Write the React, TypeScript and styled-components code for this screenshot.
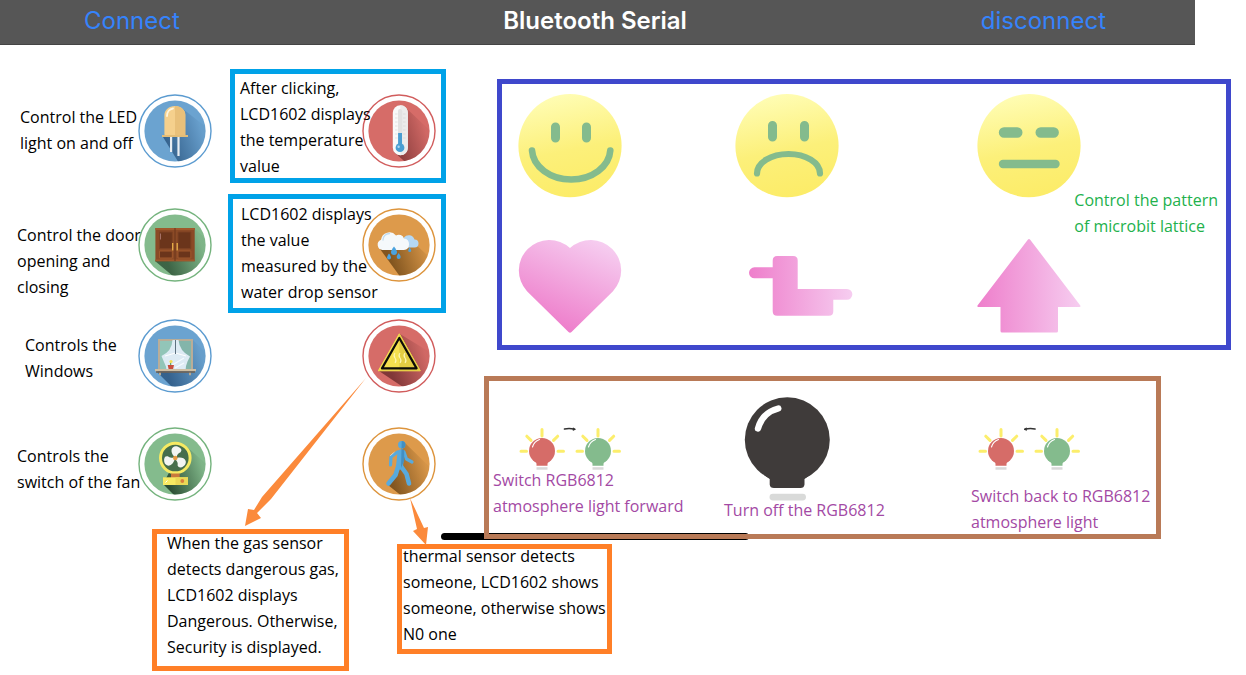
import React from 'react';
import styled, { createGlobalStyle } from 'styled-components';

const GlobalStyle = createGlobalStyle`
  *, *::before, *::after { box-sizing: border-box; }
  body {
    margin: 0;
    background: #fff;
    color: #000;
    font-family: "Open Sans", "Noto Sans", sans-serif;
    font-size: 16px;
    line-height: 26px;
  }
  svg { display: block; }
`;

const TopBar = styled.header`
  display: grid;
  grid-template-columns: 1fr auto 1fr;
  align-items: center;
  height: 45px;
  margin-right: 51px;
  padding: 0 89px 3px 84px;
  background: #565656;
  border-bottom: 1px solid #444;
  font-family: Inter, "Liberation Sans", sans-serif;
`;

const Title = styled.h1`
  margin: 0;
  color: #fff;
  font-size: 24px;
  font-weight: 600;
  line-height: 32px;
`;

const BarButton = styled.button<{ $end?: boolean }>`
  justify-self: ${p => (p.$end ? 'end' : 'start')};
  padding: 0;
  border: 0;
  background: none;
  color: #3583fb;
  font: inherit;
  font-size: 24px;
  line-height: 32px;
  cursor: pointer;
`;

const Main = styled.main`
  display: flex;
  align-items: flex-start;
  padding-top: 24px;
`;

const Controls = styled.section`
  flex: none;
  width: 446px;
`;

const ControlRow = styled.div<{ $gap: number }>`
  display: grid;
  grid-template-columns: 138px 74px 1fr;
  align-items: start;
  margin-top: ${p => p.$gap}px;
`;

const Text = styled.p<{ $top?: number; $left?: number; $color?: string }>`
  margin: ${p => p.$top ?? 0}px 0 0 ${p => p.$left ?? 0}px;
  color: ${p => p.$color ?? '#000'};
  white-space: pre;
`;

const IconButton = styled.button<{ $top?: number; $left?: number }>`
  display: block;
  margin: ${p => p.$top ?? 0}px 0 0 ${p => p.$left ?? 0}px;
  padding: 0;
  border: 0;
  background: none;
  cursor: pointer;
`;

const Reading = styled.div<{ $framed?: boolean; $wide?: boolean }>`
  display: grid;
  justify-self: end;
  width: ${p => (p.$wide ? 218 : 216)}px;
  height: ${p => (p.$framed ? (p.$wide ? '119px' : '114px') : 'auto')};
  border: ${p => (p.$framed ? '5px solid #00a2e8' : '0 solid transparent')};
  padding-right: ${p => (p.$framed ? 5 : 10)}px;

  > * { grid-area: 1 / 1; }
  > button { justify-self: end; align-self: start; }
  > p { position: relative; justify-self: start; pointer-events: none; }
`;

const Notes = styled.div`
  display: flex;
  align-items: flex-start;
  gap: 48px;
  margin-top: 28px;
  padding-left: 152px;
`;

const Note = styled.div<{ $w: number; $h: number; $top?: number }>`
  position: relative;
  flex: none;
  width: ${p => p.$w}px;
  height: ${p => p.$h}px;
  margin-top: ${p => p.$top ?? 0}px;
  border: 5px solid #ff7f27;
`;

const Pointer = styled.svg<{ $left: number; $rise: number }>`
  position: absolute;
  left: ${p => p.$left}px;
  bottom: calc(100% + ${p => p.$rise}px);
  pointer-events: none;
`;

const Panels = styled.section`
  flex: 1;
  min-width: 0;
  padding: 10px 15px 0 38px;
`;

const PatternPanel = styled.div`
  display: grid;
  grid-template-columns: 217fr 242fr 249fr;
  grid-template-rows: 104px 94px;
  row-gap: 41px;
  align-items: start;
  height: 271px;
  margin-left: 13px;
  padding: 10px 0 0 16px;
  border: 5px solid #3f48cc;
`;

const PatternCaption = styled.div`
  grid-area: 1 / 3 / 3 / 4;
  justify-self: end;
  align-self: start;
  padding: 93px 8px 0 0;
  pointer-events: none;
`;

const Cell = styled.div<{ $col: number; $row: number }>`
  grid-area: ${p => p.$row} / ${p => p.$col};
`;

const LightPanel = styled.div`
  position: relative;
  z-index: 0;
  display: grid;
  grid-template-columns: 231fr 247fr 185fr;
  height: 163px;
  margin: 26px 70px 0 0;
  padding-left: 4px;
  border: 5px solid #b97a57;

  &::before {
    content: '';
    position: absolute;
    z-index: -2;
    left: -48px;
    bottom: -6px;
    width: 308px;
    height: 7px;
    border-radius: 4px;
    background: #000;
  }
`;

const LightEdge = styled.span`
  position: absolute;
  z-index: -1;
  inset: -5px;
  border: 5px solid #b97a57;
  pointer-events: none;
`;

const tones = {
  blue: { disc: '#6ba3d0', ring: '#5b9bd0', shade: '#27517c' },
  red: { disc: '#d66c68', ring: '#d15c5c', shade: '#6b2a2c' },
  green: { disc: '#84bb8d', ring: '#74b37d', shade: '#2c4f34' },
  orange: { disc: '#dd9a4b', ring: '#dd943c', shade: '#6b4414' },
};

function Badge({ id, tone, shadow, depth = 0.8, children }: {
  id: string; tone: keyof typeof tones; shadow: string; depth?: number; children: React.ReactNode;
}) {
  const t = tones[tone];
  return (
    <svg width="74" height="74" viewBox="0 0 74 74" aria-hidden="true">
      <defs>
        <clipPath id={`${id}-clip`}><circle cx="37" cy="37" r="30.6" /></clipPath>
        <linearGradient id={`${id}-shade`} gradientUnits="userSpaceOnUse" x1="28" y1="50" x2="64" y2="38">
          <stop offset="0" stopColor={t.shade} stopOpacity={depth} />
          <stop offset="1" stopColor={t.shade} stopOpacity="0.06" />
        </linearGradient>
      </defs>
      <circle cx="37" cy="37" r="36" fill="#fff" stroke={t.ring} strokeWidth="1.4" />
      <circle cx="37" cy="37" r="30.6" fill={t.disc} />
      <path d={shadow} fill={`url(#${id}-shade)`} clipPath={`url(#${id}-clip)`} />
      {children}
    </svg>
  );
}

const LedBadge = () => (
  <Badge id="led" tone="blue" shadow="M45 15L72 36V74H44L25 43Z">
    <path d="M32 42h2.2v16H32z" fill="#e8edf2" />
    <path d="M39.4 42h2.2v20h-2.2z" fill="#e8edf2" />
    <path d="M26.4 42V21c0-5 4.500-9 10.600-9s10.300 4 10.300 9v21z" fill="#f5d08d" />
    <path d="M37 12c6 0 10.300 4 10.300 9v21H37z" fill="#e9c07a" />
    <path d="M29 22c0-4 2.500-7 6-7.500" fill="none" stroke="#fff6df" strokeWidth="1.800" strokeLinecap="round" />
    <path d="M24 41h26v2H24z" fill="#e3bd78" />
  </Badge>
);

const DoorBadge = () => (
  <Badge id="door" tone="green" shadow="M56 20L74 37V74H42L17 53Z">
    <path d="M17.400 20h39.300v33.300H17.400z" fill="#8b4a26" />
    <path d="M17.400 20h39.300v2H17.400zM17.400 51.500h39.300v1.800H17.400z" fill="#a0582c" />
    {[21.500, 40].map(x => (
      <g key={x}>
        <path d={`M${x} 24h12.800v16.500h-12.800z`} fill="#6b351b" stroke="#7d4122" strokeWidth="1" />
        <path d={`M${x} 43h12.800v7h-12.800z`} fill="#6b351b" stroke="#a0582c" strokeWidth="1" />
      </g>
    ))}
    <path d="M37 20v33" stroke="#6b351b" strokeWidth="1" />
    <path d="M34.700 35v7.500M39.200 35v7.500" stroke="#e8b04a" strokeWidth="1.300" />
    <path d="M22.500 25.500v6" stroke="#c99" strokeWidth="0.600" />
  </Badge>
);

const ThermometerBadge = () => (
  <Badge id="temp" tone="red" shadow="M43 13L74 42V74H50L32 58Z">
    <rect x="30.800" y="11.300" width="15" height="50" rx="7.500" fill="#f9f9f9" />
    <path d="M38.300 11.300c4.500 0 7.500 3.500 7.500 7.500v35c0 4-3 7.500-7.500 7.500z" fill="#ececec" />
    <rect x="36" y="15" width="4.200" height="38" rx="2" fill="#e2e2e2" />
    <path d="M33 20h2.500M33 24h2.500M33 28h2.500M33 32h2.500M33 36h2.500M33 40h2.500M33 44h2.500M41 20h2.500M41 24h2.500M41 28h2.500M41 32h2.500M41 36h2.500M41 40h2.500M41 44h2.500" stroke="#d3d3d3" strokeWidth="0.600" />
    <path d="M36.100 39h3.900v12h-3.900z" fill="#4a9ed2" />
    <circle cx="38" cy="53.700" r="4.400" fill="#4a9ed2" />
    <circle cx="36.600" cy="52.800" r="1.200" fill="#a9d6f2" />
  </Badge>
);

const RainBadge = () => (
  <Badge id="rain" tone="orange" shadow="M52 35L74 55V74H42L18 41Z">
    <path d="M43 39.500h9.500a4 4 0 0 0 0-8 6 6 0 0 0-10.500-2z" fill="#b5d8f5" />
    <path d="M20.500 42a5.300 5.300 0 0 1-1.500-10.200A8.500 8.500 0 0 1 34 27.500a5.500 5.500 0 0 1 8 3A5.800 5.800 0 0 1 42 42z" fill="#f5f9fb" />
    <path d="M21 32c0-4 3-6.500 6.500-6.500" fill="none" stroke="#c1dcf0" strokeWidth="1.300" strokeLinecap="round" />
    <g fill="#4aa3df">
      <path d="M32 38.500q3 4 3 5.500a3 3 0 0 1-6 0q0-1.500 3-5.500z" />
      <path d="M27 45.500q2 2.700 2 4a2 2 0 0 1-4 0q0-1.300 2-4z" />
      <path d="M36.700 45q2 2.700 2 4a2 2 0 0 1-4 0q0-1.300 2-4z" />
      <path d="M47.700 39.500q1.500 2 1.500 3a1.500 1.500 0 0 1-3 0q0-1 1.500-3z" />
    </g>
  </Badge>
);

const WindowBadge = () => (
  <Badge id="window" tone="blue" shadow="M54 20L74 40V74H40L19 53Z">
    <path d="M20 20h35v31H20z" fill="#b9ad98" />
    <path d="M22 22h31v28H22z" fill="#92c5b8" />
    <path d="M37.500 22H53v28H37.500z" fill="#83b5aa" />
    <path d="M28 36h20v14H28z" fill="#b8dcea" />
    <path d="M34.500 21h6q1 11 11.500 16.500l-2.500 5L47 50H29l-3-7-2.500-6Q34 32 34.500 21z" fill="#ddebf4" />
    <path d="M27 37l10.500-3 10.500 3" fill="none" stroke="#fff" strokeWidth="1" />
    <path d="M37.500 21v14" stroke="#5d7180" strokeWidth="1" />
    <path d="M31 48l15-9M37 49l9-5" stroke="#f5fbff" strokeWidth="1.200" />
    <path d="M29.700 46h6.300l-1 4.500h-4.300z" fill="#c84f3d" />
    <path d="M32.700 46v-2.500" stroke="#58954b" strokeWidth="1" />
    <circle cx="33" cy="42.500" r="1.600" fill="#f4df52" />
    <path d="M17 50h41v2.200H17z" fill="#cfbfa4" />
    <path d="M18 52.200h39v1.600H18z" fill="#73604e" />
    <path d="M21 53.800h2v2.500h-2zM51 53.800h2v2.500h-2z" fill="#b9a88e" />
  </Badge>
);

const FanBadge = () => (
  <Badge id="fan" tone="green" shadow="M49 20L74 42V74H42L25 57L33 42Z" depth={1}>
    <circle cx="37.300" cy="31" r="14.800" fill="#466e4c" stroke="#f6ea62" strokeWidth="3" />
    {[10, 130, 250].map(a => (
      <path key={a} d="M36.300 30C29.500 25 32 18.500 37.500 19.300Q43.500 20.500 41.500 24.500Q38.500 26 38.500 30z" fill="#f3f5f3" transform={`rotate(${a} 37.3 31)`} />
    ))}
    <circle cx="37.300" cy="31" r="2.300" fill="#e79b45" />
    <path d="M33 46.500h8.700V51H33z" fill="#c9793c" />
    <path d="M25 50.300h25V58H25z" fill="#f6ea62" />
    <path d="M37.500 50.300H50V58H37.500z" fill="#ead856" />
    <circle cx="44.300" cy="54" r="1.900" fill="#db7f3c" />
    <path d="M27.500 55.500l2-2" stroke="#fff" strokeWidth="1" />
  </Badge>
);

const GasBadge = () => (
  <Badge id="gas" tone="red" shadow="M38 15L74 37V74H50L17 52Z">
    <path d="M37.300 14.800L58.300 51.800H16.300z" fill="#f4e04f" stroke="#f4e04f" strokeWidth="1" strokeLinejoin="round" />
    <path d="M37.300 14.800L58.300 51.800H37.300z" fill="#e3cd43" />
    <path d="M37.300 19L54.600 49.400H20z" fill="none" stroke="#0b0b08" strokeWidth="2.200" strokeLinejoin="round" />
    <path d="M33 34q-2 2.500 0 5t0 5M38 34q-2 2.500 0 5t0 5M43 34q-2 2.500 0 5t0 5" fill="none" stroke="#fdf6b2" strokeWidth="1.100" />
  </Badge>
);

const PersonBadge = () => (
  <Badge id="person" tone="orange" shadow="M42 15L74 46V74H46L26 58L38 35Z">
    <circle cx="39.700" cy="17.800" r="3.700" fill="#58aadd" />
    <g fill="none" stroke="#58aadd" strokeLinecap="round" strokeLinejoin="round">
      <path d="M39 26L37.500 39" strokeWidth="7" />
      <path d="M35.500 25L29 30L28.500 38" strokeWidth="3.200" />
      <path d="M42 25L44.500 32L50 35" strokeWidth="3.200" />
      <path d="M36 40L33.500 48L26.500 56.500" strokeWidth="4.600" />
      <path d="M39.500 40L44.500 47L47 56.500" strokeWidth="4.600" />
    </g>
    <path d="M39.700 14.100a3.700 3.700 0 0 1 0 7.400l2.500 2v10L39 41z" fill="#438fc2" />
    <path d="M28.500 28.500l4-3.500" stroke="#fff" strokeWidth="0.900" strokeDasharray="1.500 1" />
  </Badge>
);

function Face({ id, children }: { id: string; children: React.ReactNode }) {
  return (
    <svg width="104" height="104" viewBox="0 0 104 104" aria-hidden="true">
      <defs>
        <linearGradient id={id} x1="0.35" y1="0" x2="0.55" y2="1">
          <stop offset="0" stopColor="#fffdb5" />
          <stop offset="0.550" stopColor="#fcf07a" />
          <stop offset="1" stopColor="#fcec68" />
        </linearGradient>
      </defs>
      <circle cx="52" cy="51.700" r="51.600" fill={`url(#${id})`} />
      <g fill="none" stroke="#84bb8d" strokeLinecap="round">{children}</g>
    </svg>
  );
}

const PinkGradient = ({ id, diagonal }: { id: string; diagonal?: boolean }) => (
  <defs>
    <linearGradient id={id} x1={diagonal ? '0.3' : '0'} y1={diagonal ? '0.9' : '0'} x2={diagonal ? '0.75' : '1'} y2="0">
      <stop offset="0" stopColor="#ee7ecb" />
      <stop offset="1" stopColor="#f6cdf0" />
    </linearGradient>
  </defs>
);

const Heart = () => (
  <svg width="104" height="94" viewBox="0 0 104 94" aria-hidden="true">
    <PinkGradient id="heart" diagonal />
    <path d="M52 9A30.500 30.500 0 0 0 9 52.200L50.500 93q1.500 1.300 3 0L95 52.200A30.500 30.500 0 0 0 52 9z" fill="url(#heart)" />
  </svg>
);

const Duck = () => (
  <svg width="104" height="94" viewBox="0 0 104 94" aria-hidden="true">
    <PinkGradient id="duck" />
    <path d="M5.500 28.300H23.700V21.500q0-4.500 4.500-4.500H44.200q4.500 0 4.500 4.500V50H98a5.300 5.300 0 0 1 0 10.700H84.300V72.200q0 4.500-4.500 4.500H28.200q-4.500 0-4.500-4.500V39.300H5.500a5.500 5.500 0 0 1 0-11z" fill="url(#duck)" />
  </svg>
);

const UpArrow = () => (
  <svg width="104" height="94" viewBox="0 0 104 94" aria-hidden="true">
    <PinkGradient id="up" />
    <path d="M50.800 0.700q1.200-1.400 2.400 0L103.300 66.500q0.700 1.500-1 1.500H81V92q0 1.500-1.500 1.500H25q-1.500 0-1.500-1.500V68H1.500q-1.700 0-1-1.500z" fill="url(#up)" />
  </svg>
);

function SmallBulb({ x, color }: { x: number; color: string }) {
  return (
    <g transform={`translate(${x} 0)`}>
      <path d="M23 2.500V9M7.800 9.200L12 13.400M38.700 9.200L34.500 13.400M2 24.300H7.500M39 24.300H44.500" stroke="#fcee6c" strokeWidth="3" strokeLinecap="round" />
      <circle cx="23" cy="24" r="13" fill={color} />
      <path d="M16 33.500h14q-1.500 1.500-1.500 3.500v1.700H17.500V37q0-2-1.500-3.500z" fill={color} />
      <path d="M13.500 20q1.500-5.500 7-7.500" fill="none" stroke="#fff" strokeWidth="1.100" strokeLinecap="round" />
      <path d="M17.500 40.200h11v2.500h-11z" fill="#d9d9d9" />
    </g>
  );
}

const BulbPair = ({ back }: { back?: boolean }) => (
  <svg width="104" height="44" viewBox="0 0 104 44" aria-hidden="true">
    <SmallBulb x={0} color="#d66c68" />
    <SmallBulb x={56} color="#84bb8d" />
    <g transform={back ? 'translate(102.5 0) scale(-1 1)' : undefined} stroke="#333" fill="#333">
      <path d="M45.500 2q5-1 10 0.200" fill="none" strokeWidth="1.600" strokeLinecap="round" />
      <path d="M54 0.800l2.500 1.500-2.500 1.300z" strokeWidth="0.500" />
    </g>
  </svg>
);

const DarkBulb = () => (
  <svg width="87" height="104" viewBox="0 0 87 104" aria-hidden="true">
    <circle cx="43.300" cy="42.700" r="42.500" fill="#3f3b3a" />
    <path d="M20 78H66L60.500 82V87.500Q60 91 56.500 91H30q-4 0-4.300-3.500V82z" fill="#3f3b3a" />
    <path d="M14 31.500Q18.500 15.500 34.300 11.500" fill="none" stroke="#fff" strokeWidth="6.400" strokeLinecap="round" />
    <rect x="25.500" y="96.700" width="36.500" height="6.800" rx="3.400" fill="#d9dad9" />
  </svg>
);

const purple = '#a349a4';

export default function App() {
  return (
    <>
      <GlobalStyle />
      <TopBar>
        <BarButton type="button">Connect</BarButton>
        <Title>Bluetooth Serial</Title>
        <BarButton type="button" $end>disconnect</BarButton>
      </TopBar>
      <Main>
        <Controls>
          <ControlRow $gap={0}>
            <Text $top={35} $left={20}>{'Control the LED\nlight on and off'}</Text>
            <IconButton type="button" aria-label="LED light" $top={25}><LedBadge /></IconButton>
            <Reading $framed>
              <IconButton type="button" aria-label="Temperature" $top={20}><ThermometerBadge /></IconButton>
              <Text $top={1} $left={5}>{'After clicking,\nLCD1602 displays\nthe temperature\nvalue'}</Text>
            </Reading>
          </ControlRow>
          <ControlRow $gap={11}>
            <Text $top={28} $left={17}>{'Control the door\nopening and\nclosing'}</Text>
            <IconButton type="button" aria-label="Door" $top={14}><DoorBadge /></IconButton>
            <Reading $framed $wide>
              <IconButton type="button" aria-label="Water drop" $top={9}><RainBadge /></IconButton>
              <Text $top={2} $left={8}>{'LCD1602 displays\nthe value\nmeasured by the\nwater drop sensor'}</Text>
            </Reading>
          </ControlRow>
          <ControlRow $gap={6}>
            <Text $top={13} $left={25}>{'Controls the\nWindows'}</Text>
            <IconButton type="button" aria-label="Window"><WindowBadge /></IconButton>
            <Reading>
              <IconButton type="button" aria-label="Gas"><GasBadge /></IconButton>
            </Reading>
          </ControlRow>
          <ControlRow $gap={34}>
            <Text $top={16} $left={17}>{'Controls the\nswitch of the fan'}</Text>
            <IconButton type="button" aria-label="Fan"><FanBadge /></IconButton>
            <Reading>
              <IconButton type="button" aria-label="Person"><PersonBadge /></IconButton>
            </Reading>
          </ControlRow>
          <Notes>
            <Note $w={197} $h={142}>
              <Pointer $left={88} $rise={7} width="122" height="150" viewBox="0 0 122 150" aria-hidden="true">
                <path d="M121 1L17 120L9 133L3 132L0 149L16 141L12 136L26 122Z" fill="#fb8a3c" />
              </Pointer>
              <Text $top={-4} $left={10}>{'When the gas sensor\ndetects dangerous gas,\nLCD1602 displays\nDangerous. Otherwise,\nSecurity is displayed.'}</Text>
            </Note>
            <Note $w={215} $h={110} $top={15}>
              <Pointer $left={8} $rise={4} width="20" height="47" viewBox="0 0 20 47" aria-hidden="true">
                <path d="M0 0L7 31L3 33L16 47L18 29L14 30Z" fill="#fb8a3c" />
              </Pointer>
              <Text $top={-6} $left={1}>{'thermal sensor detects\nsomeone, LCD1602 shows\nsomeone, otherwise shows\nN0 one'}</Text>
            </Note>
          </Notes>
        </Controls>
        <Panels>
          <PatternPanel>
            <Cell $col={1} $row={1}>
              <IconButton type="button" aria-label="Smile">
                <Face id="smile">
                  <path d="M37.500 33V44M68.500 33V44" strokeWidth="9" />
                  <path d="M14 56.500A39.200 30.500 0 0 0 92.300 56.500" strokeWidth="6.600" />
                </Face>
              </IconButton>
            </Cell>
            <Cell $col={2} $row={1}>
              <IconButton type="button" aria-label="Sad">
                <Face id="sad">
                  <path d="M37.500 31.500V43M69.500 31.500V43" strokeWidth="9" />
                  <path d="M22 79.500A31.500 19.500 0 0 1 85 79.500" strokeWidth="6.200" />
                </Face>
              </IconButton>
            </Cell>
            <Cell $col={3} $row={1}>
              <IconButton type="button" aria-label="Neutral">
                <Face id="neutral">
                  <path d="M27 38.500H40.300M63.700 38.500H76.700" strokeWidth="10.400" />
                  <path d="M26 70H78.500" strokeWidth="8.400" />
                </Face>
              </IconButton>
            </Cell>
            <Cell $col={1} $row={2}>
              <IconButton type="button" aria-label="Heart"><Heart /></IconButton>
            </Cell>
            <Cell $col={2} $row={2}>
              <IconButton type="button" aria-label="Duck" $left={14}><Duck /></IconButton>
            </Cell>
            <Cell $col={3} $row={2}>
              <IconButton type="button" aria-label="Arrow"><UpArrow /></IconButton>
            </Cell>
            <PatternCaption>
              <Text $color="#22b14c">{'Control the pattern\nof microbit lattice'}</Text>
            </PatternCaption>
          </PatternPanel>
          <LightPanel>
            <LightEdge />
            <div>
              <IconButton type="button" aria-label="Forward" $top={46} $left={26}><BulbPair /></IconButton>
              <Text $top={-4} $color={purple}>{'Switch RGB6812\natmosphere light forward'}</Text>
            </div>
            <div>
              <IconButton type="button" aria-label="Off" $top={16} $left={20}><DarkBulb /></IconButton>
              <Text $top={-4} $color={purple}>Turn off the RGB6812</Text>
            </div>
            <div>
              <IconButton type="button" aria-label="Back" $top={46} $left={7}><BulbPair back /></IconButton>
              <Text $top={12} $color={purple}>{'Switch back to RGB6812\natmosphere light'}</Text>
            </div>
          </LightPanel>
        </Panels>
      </Main>
    </>
  );
}
